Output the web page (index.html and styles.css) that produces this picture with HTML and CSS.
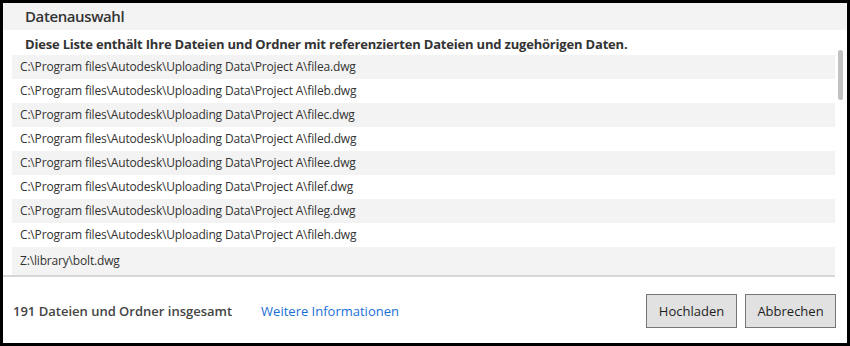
FILE: index.html
```html
<!DOCTYPE html>
<html lang="de">
<head>
  <meta charset="UTF-8" />
  <title>Datenauswahl</title>
  <link rel="stylesheet" href="styles.css">
</head>
<body>
  <div class="dialog">
    <div class="dialog-title">Datenauswahl</div>

    <div class="main">
      <div class="content">
        <div class="intro">Diese Liste enthält Ihre Dateien und Ordner mit referenzierten Dateien und zugehörigen Daten.</div>
        <div class="file-list">
          <div class="row">C:\Program files\Autodesk\Uploading Data\Project A\filea.dwg</div>
          <div class="row">C:\Program files\Autodesk\Uploading Data\Project A\fileb.dwg</div>
          <div class="row">C:\Program files\Autodesk\Uploading Data\Project A\filec.dwg</div>
          <div class="row">C:\Program files\Autodesk\Uploading Data\Project A\filed.dwg</div>
          <div class="row">C:\Program files\Autodesk\Uploading Data\Project A\filee.dwg</div>
          <div class="row">C:\Program files\Autodesk\Uploading Data\Project A\filef.dwg</div>
          <div class="row">C:\Program files\Autodesk\Uploading Data\Project A\fileg.dwg</div>
          <div class="row">C:\Program files\Autodesk\Uploading Data\Project A\fileh.dwg</div>
          <div class="row last">Z:\library\bolt.dwg</div>
        </div>
      </div>
      <div class="scroll-gutter">
        <div class="thumb"></div>
      </div>
    </div>

    <div class="footer">
      <span class="count">191 Dateien und Ordner insgesamt</span>
      <a class="more" href="#">Weitere Informationen</a>
      <div class="buttons">
        <button>Hochladen</button>
        <button>Abbrechen</button>
      </div>
    </div>
  </div>
</body>
</html>
```

FILE: styles.css
```css
body {
  margin: 0;
  font-family: 'Open Sans', 'Noto Sans', sans-serif;
  color: #333;
}
.dialog {
  width: 850px;
  height: 346px;
  box-sizing: border-box;
  border: 3px solid #000;
  background: white;
  display: flex;
  flex-direction: column;
}
.dialog-title {
  height: 27px;
  line-height: 27px;
  padding-left: 22px;
  background: #f3f3f3;
  font-size: 15px;
  font-weight: 600;
  letter-spacing: -0.4px;
  color: #333;
}
.main {
  display: flex;
}
.content {
  flex: 1;
  padding-left: 9px;
  border-bottom: 2px solid #d6d6d6;
}
.intro {
  height: 25px;
  line-height: 28px;
  padding-left: 13px;
  font-size: 13px;
  font-weight: 700;
  letter-spacing: -0.19px;
  color: #333;
}
.row {
  height: 24px;
  line-height: 24px;
  padding-left: 8px;
  font-size: 12px;
  letter-spacing: -0.17px;
  color: #333;
}
.row:nth-child(odd) {
  background: #f3f3f3;
}
.row.last {
  height: 28px;
  line-height: 28px;
}
.scroll-gutter {
  width: 12px;
  padding-top: 20px;
  padding-left: 3px;
  box-sizing: border-box;
}
.thumb {
  width: 5px;
  height: 50px;
  border-radius: 3px;
  background: #c2c2c2;
}
.footer {
  flex: 1;
  display: flex;
  align-items: center;
  padding: 2px 11px 0 10px;
}
.count {
  font-size: 13px;
  font-weight: 600;
  color: #444;
}
.more {
  margin-left: 29px;
  font-size: 13px;
  color: #1a6fd6;
  text-decoration: none;
}
.buttons {
  margin-left: auto;
  display: flex;
  gap: 8px;
}
button {
  width: 91px;
  height: 34px;
  background: #e1e1e1;
  border: 1px solid #767676;
  font-family: inherit;
  font-size: 13px;
  color: #1e1e1e;
  padding: 0;
}
```
